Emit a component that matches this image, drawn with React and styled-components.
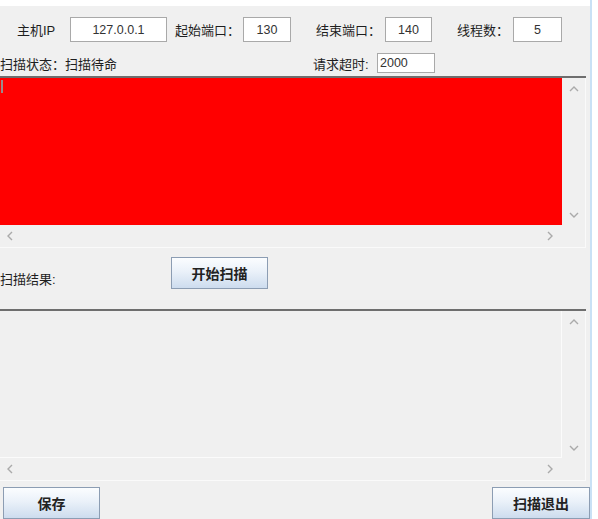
import React from "react";
import styled, { createGlobalStyle } from "styled-components";

const Global = createGlobalStyle`
  html, body { margin: 0; padding: 0; background: #ffffff; }
  body { font-family: "Liberation Sans", "Noto Sans CJK SC", sans-serif; }
  * { box-sizing: border-box; }
`;

const Window = styled.div`
  width: 598px;
  height: 519px;
  overflow: hidden;
  display: flex;
  background: #ffffff;
`;

const Content = styled.div`
  width: 590px;
  height: 519px;
  display: flex;
  flex-direction: column;
  background: #f0f0f0;
`;

const Frame = styled.div`
  width: 2px;
  background: #c9e1f5;
`;

const TopBand = styled.div`
  height: 6px;
  background: #ffffff;
`;

const Row = styled.div`
  display: flex;
  align-items: center;
  height: ${(p) => p.$h}px;
  margin-top: ${(p) => p.$mt || 0}px;
`;

const Label = styled.span`
  font-family: "Liberation Sans", "Noto Sans CJK SC", sans-serif;
  font-size: 13px;
  color: #1e1e1e;
  width: ${(p) => p.$w}px;
  margin-left: ${(p) => p.$ml || 0}px;
  white-space: nowrap;
  flex: none;
`;

const Field = styled.div`
  width: ${(p) => p.$w}px;
  height: ${(p) => p.$h || 25}px;
  flex: none;
  background: #ffffff;
  border: 1px solid #a9a9a9;
  display: flex;
  align-items: center;
  justify-content: ${(p) => (p.$left ? "flex-start" : "center")};
  padding-left: ${(p) => (p.$left ? 2 : 0)}px;
  font-size: 12.5px;
  color: #333;
`;

const Spacer = styled.div`
  flex: 1;
`;

const Gap = styled.div`
  height: ${(p) => p.$h}px;
  flex: none;
`;

const Pane = styled.div`
  width: 586px;
  display: grid;
  grid-template-columns: 562px 24px;
  grid-template-rows: ${(p) => p.$h}px 23px;
  border-top: 2px solid #6e6e6e;
`;

const Viewport = styled.div`
  position: relative;
  background: ${(p) => (p.$red ? "#ff0000" : "#f0f0f0")};
  border-right: 1px solid ${(p) => (p.$red ? "#ff0000" : "#fbfbfb")};
  border-bottom: 1px solid ${(p) => (p.$red ? "#ff0000" : "#fbfbfb")};
`;

const Caret = styled.div`
  position: absolute;
  left: 1px;
  top: 2px;
  width: 2px;
  height: 13px;
  background: #9a8b8b;
`;

const VBar = styled.div`
  background: #f0f0f0;
  border-right: 1px solid #fafafa;
  display: flex;
  flex-direction: column;
  justify-content: space-between;
  align-items: center;
  padding: 7px 0 6px;
`;

const HBar = styled.div`
  background: #f0f0f0;
  border-bottom: 1px solid #fafafa;
  display: flex;
  justify-content: space-between;
  align-items: center;
  padding: 0 8px 0 6px;
`;

const Corner = styled.div`
  background: #f0f0f0;
  border-right: 1px solid #fafafa;
  border-bottom: 1px solid #fafafa;
`;

const Middle = styled.div`
  height: 61px;
  display: flex;
  align-items: flex-start;
`;

const ResultLabel = styled(Label)`
  margin-top: 21px;
`;

const Button = styled.button`
  width: ${(p) => p.$w}px;
  height: 32px;
  margin-top: ${(p) => p.$mt || 0}px;
  margin-left: ${(p) => p.$ml || 0}px;
  flex: none;
  border: 1px solid #8c9db3;
  background: linear-gradient(#fbfdff 0%, #eaf1f9 45%, #cddcee 100%);
  font-family: "Noto Sans CJK SC", sans-serif;
  font-weight: 700;
  font-size: 14px;
  color: #222;
  padding: 0;
`;

const Bottom = styled.div`
  display: flex;
  justify-content: space-between;
  margin-top: 6px;
  padding-left: 3px;
`;

const Chevron = ({ dir }) => {
  const paths = {
    up: "M1 6 L5 2 L9 6",
    down: "M1 2 L5 6 L9 2",
    left: "M6 1 L2 5 L6 9",
    right: "M2 1 L6 5 L2 9",
  };
  const vertical = dir === "up" || dir === "down";
  return (
    <svg width={vertical ? 10 : 8} height={vertical ? 8 : 10} viewBox={vertical ? "0 0 10 8" : "0 0 8 10"}>
      <path d={paths[dir]} fill="none" stroke="#aaaaaa" strokeWidth="1.4" />
    </svg>
  );
};

const ScrollPane = ({ h, red }) => (
  <Pane $h={h}>
    <Viewport $red={red}>{red && <Caret />}</Viewport>
    <VBar>
      <Chevron dir="up" />
      <Chevron dir="down" />
    </VBar>
    <HBar>
      <Chevron dir="left" />
      <Chevron dir="right" />
    </HBar>
    <Corner />
  </Pane>
);

export default function App() {
  return (
    <>
      <Global />
      <Window>
        <Content>
          <TopBand />
          <Row $h={25} $mt={11}>
            <Label $w={53} $ml={17}>主机IP</Label>
            <Field $w={97}>127.0.0.1</Field>
            <Label $w={68} $ml={8}>起始端口：</Label>
            <Field $w={48}>130</Field>
            <Label $w={69} $ml={25}>结束端口：</Label>
            <Field $w={47}>140</Field>
            <Label $w={56} $ml={25}>线程数：</Label>
            <Field $w={49}>5</Field>
          </Row>
          <Row $h={20} $mt={11}>
            <Label $w={313}>扫描状态：扫描待命</Label>
            <Label $w={64}>请求超时:</Label>
            <Field $w={58} $h={20} $left>2000</Field>
            <Spacer />
          </Row>
          <Gap $h={3} />
          <ScrollPane h={147} red />
          <Middle>
            <ResultLabel $w={171}>扫描结果:</ResultLabel>
            <Button $w={97} $mt={9}>开始扫描</Button>
          </Middle>
          <ScrollPane h={147} />
          <Bottom>
            <Button $w={97}>保存</Button>
            <Button $w={98}>扫描退出</Button>
          </Bottom>
        </Content>
        <Frame />
      </Window>
    </>
  );
}
